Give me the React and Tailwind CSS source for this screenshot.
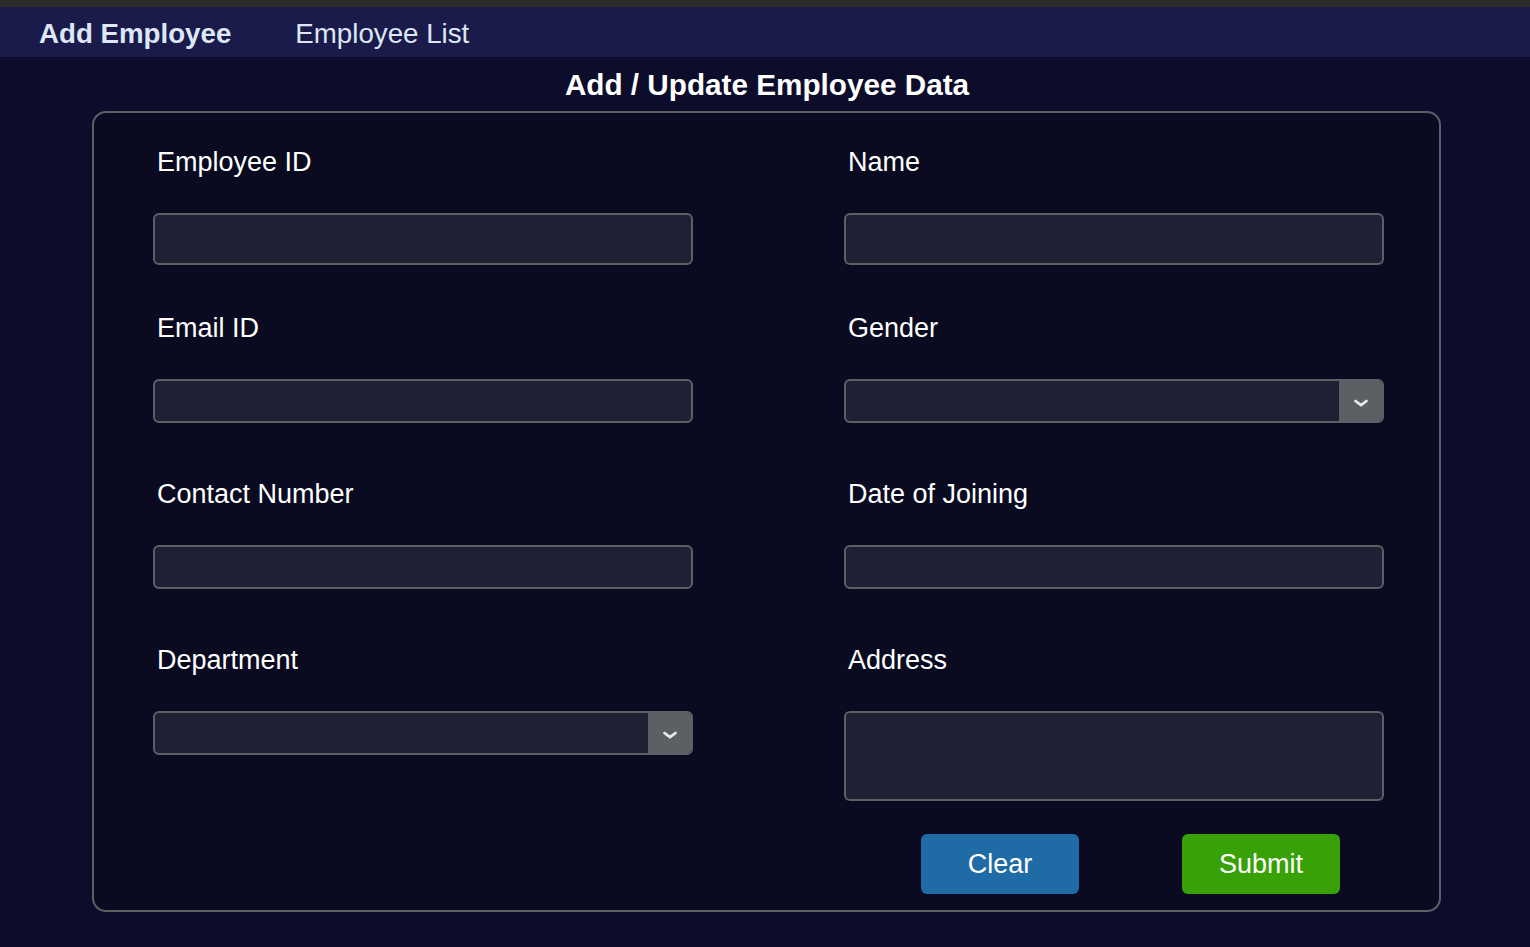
import { useState } from "react";

const font = { fontFamily: '"Liberation Sans", Arial, sans-serif' };

const Chevron = () => (
  <svg width="16" height="10" viewBox="0 0 16 10" fill="none" className="mt-[3px]">
    <path d="M2.5 3l5.5 4.2 5.5-4.2" stroke="#e5e7eb" strokeWidth="2.8" strokeLinecap="round" strokeLinejoin="round" />
  </svg>
);

const Field = ({ label, children }) => (
  <div className="flex flex-col h-[166px]">
    <label className="text-[27px] leading-[32px] text-white ml-[4px] mt-[1px] -mb-[1px]">{label}</label>
    <div className="mt-[36px]">{children}</div>
  </div>
);

const inputCls =
  "w-full bg-[#1e2134] border-2 border-[#5c5f64] rounded-[6px] text-white text-[20px] px-3 outline-none";

const SelectBox = ({ value, onChange, options }) => (
  <div className="relative w-full h-[44px] bg-[#1e2134] border-2 border-[#5c5f64] rounded-[6px] overflow-hidden">
    <select
      value={value}
      onChange={onChange}
      className="w-full h-full bg-transparent text-white text-[20px] px-3 appearance-none outline-none"
    >
      <option value=""></option>
      {options.map((o) => (
        <option key={o} value={o} className="bg-[#1e2134]">
          {o}
        </option>
      ))}
    </select>
    <div className="absolute right-0 top-0 h-full w-[43px] bg-[#5c5f64] flex items-center justify-center pointer-events-none">
      <Chevron />
    </div>
  </div>
);

export default function App() {
  const empty = { id: "", name: "", email: "", gender: "", contact: "", doj: "", dept: "", address: "" };
  const [form, setForm] = useState(empty);
  const set = (k) => (e) => setForm({ ...form, [k]: e.target.value });

  return (
    <div className="min-h-screen bg-[#0c0d2b]" style={font}>
      <div className="h-[7px] bg-[#2b2b2b]" />
      <nav className="h-[50px] bg-[#1a1b4b] flex items-center pt-[3px] pl-[39px] gap-[64px] text-[27.7px] text-[#dde7f6]">
        <a className="font-bold cursor-pointer">Add Employee</a>
        <a className="cursor-pointer">Employee List</a>
      </nav>

      <h1 className="pt-[10px] mb-[8px] text-center text-[29.7px] leading-[36px] font-bold text-white pl-[4px]">
        Add / Update Employee Data
      </h1>

      <form
        onSubmit={(e) => e.preventDefault()}
        className="ml-[92px] w-[1349px] bg-[#0a0b20] border-2 border-[#5c5f64] rounded-[14px] pt-[32px] pb-[16px] pl-[59px] pr-[55px]"
      >
        <div className="grid grid-cols-2 gap-x-[151px]">
          <Field label="Employee ID">
            <input value={form.id} onChange={set("id")} className={`${inputCls} h-[52px]`} />
          </Field>
          <Field label="Name">
            <input value={form.name} onChange={set("name")} className={`${inputCls} h-[52px]`} />
          </Field>
          <Field label="Email ID">
            <input value={form.email} onChange={set("email")} className={`${inputCls} h-[44px]`} />
          </Field>
          <Field label="Gender">
            <SelectBox value={form.gender} onChange={set("gender")} options={["Male", "Female", "Other"]} />
          </Field>
          <Field label="Contact Number">
            <input value={form.contact} onChange={set("contact")} className={`${inputCls} h-[44px]`} />
          </Field>
          <Field label="Date of Joining">
            <input value={form.doj} onChange={set("doj")} className={`${inputCls} h-[44px]`} />
          </Field>
          <div className="flex flex-col">
            <label className="text-[27px] leading-[32px] text-white ml-[4px] mt-[1px] -mb-[1px]">Department</label>
            <div className="mt-[36px]">
              <SelectBox value={form.dept} onChange={set("dept")} options={["HR", "Finance", "IT", "Sales"]} />
            </div>
          </div>
          <div className="flex flex-col">
            <label className="text-[27px] leading-[32px] text-white ml-[4px] mt-[1px] -mb-[1px]">Address</label>
            <div className="mt-[36px]">
              <textarea
                value={form.address}
                onChange={set("address")}
                className={`${inputCls} h-[90px] block resize-none py-2`}
              />
            </div>
            <div className="flex mt-[33px] pl-[77px] gap-[103px]">
              <button
                type="button"
                onClick={() => setForm(empty)}
                className="w-[158px] h-[60px] rounded-[6px] bg-[#1f6ba6] text-white text-[27px]"
              >
                Clear
              </button>
              <button type="submit" className="w-[158px] h-[60px] rounded-[6px] bg-[#38a108] text-white text-[27px]">
                Submit
              </button>
            </div>
          </div>
        </div>
      </form>
    </div>
  );
}
